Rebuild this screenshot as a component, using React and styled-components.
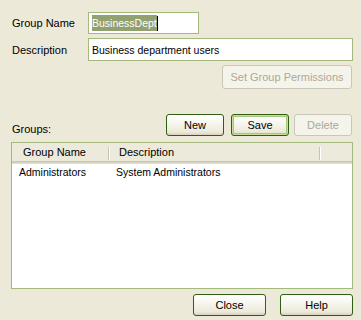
import styled, { createGlobalStyle, css } from 'styled-components'

const GlobalStyle = createGlobalStyle`
    html, body {
        margin: 0;
        padding: 0;
        background: #ece9d8;
    }
    body {
        font-family: "Liberation Sans", Arial, sans-serif;
        font-size: 10.5px;
        color: #000;
    }
`

const Dialog = styled.div`
    width: 361px;
    height: 320px;
    box-sizing: border-box;
    padding: 12px 8px 0 11px;
    background: #ece9d8;
    display: flex;
    flex-direction: column;
`
const FieldRow = styled.div`
    display: flex;
    align-items: center;
    margin-top: ${({ top }) => top || 0}px;
`
const Label = styled.label`
    width: 76px;
    padding-left: 1px;
    flex-shrink: 0;
    font-size: 11px;
`
const Input = styled.div`
    box-sizing: border-box;
    width: ${({ width }) => width ? `${width}px` : 'auto'};
    flex: ${({ width }) => width ? 'none' : '1'};
    height: ${({ height }) => height || 22}px;
    border: 1px solid #a5b97f;
    background: #fff;
    padding: 0 3px;
    display: flex;
    align-items: center;
    white-space: nowrap;
`
const Selected = styled.span`
    background: #93a070;
    color: #fff;
    line-height: 16px;
`
const Caret = styled.span`
    display: inline-block;
    width: 1px;
    height: 15px;
    background: #000;
`
const ButtonRow = styled.div`
    display: flex;
    align-items: flex-end;
    justify-content: flex-end;
    margin-top: ${({ top }) => top || 0}px;
    margin-right: ${({ right }) => right || 0}px;
`
const Button = styled.button`
    box-sizing: border-box;
    width: ${({ width }) => width}px;
    height: ${({ height }) => height || 22}px;
    margin-left: ${({ gap }) => gap || 0}px;
    font-family: inherit;
    font-size: 11px;
    border-radius: 3px;
    padding: 0;
    border: 1px solid #2f5d12;
    color: #000;
    background: linear-gradient(#ffffff 0%, #f7f6ef 40%, #ece9d8 85%, #d6d0c0 100%);
    ${({ primary }) => primary && css`
        box-shadow: inset 0 0 0 1px #c6df9c, inset 0 0 0 2px #a6c87a;
    `}
    ${({ disabled }) => disabled && css`
        border-color: #c9c7ba;
        color: #aca899;
        background: #f5f4ea;
    `}
`
const GroupsLabel = styled.span`
    margin-right: auto;
    padding-left: 1px;
    padding-bottom: 1px;
    font-size: 11px;
`
const List = styled.div`
    margin-top: 6px;
    height: 147px;
    width: 342px;
    box-sizing: border-box;
    border: 1px solid #a5b97f;
    background: #fff;
    display: flex;
    flex-direction: column;
`
const Header = styled.div`
    display: flex;
    height: 21px;
    background: #ebeadb;
    box-shadow: inset 0 -1px #e2dfcf, inset 0 -2px #d6d3c1, inset 0 -3px #cbc7b8;
`
const HeadCell = styled.div`
    width: ${({ width }) => width}px;
    flex: ${({ width }) => width ? 'none' : '1'};
    box-sizing: border-box;
    padding: 3px 0 0 ${({ pad }) => pad}px;
    position: relative;
    font-size: 11px;
    ${({ divider }) => divider && css`
        &::after {
            content: '';
            position: absolute;
            right: 0;
            top: 4px;
            height: 13px;
            width: 1px;
            background: #c7c5b2;
            box-shadow: 1px 0 #fff;
        }
    `}
`
const Row = styled.div`
    display: flex;
    height: 16px;
    align-items: center;
`
const Cell = styled.div`
    width: ${({ width }) => width}px;
    flex: ${({ width }) => width ? 'none' : '1'};
    padding-left: ${({ pad }) => pad}px;
    box-sizing: border-box;
    white-space: nowrap;
`

const App = () => {
    return (
        <Dialog>
            <GlobalStyle />
            <FieldRow>
                <Label>Group Name</Label>
                <Input width={111}>
                    <Selected>BusinessDept</Selected>
                    <Caret />
                </Input>
            </FieldRow>
            <FieldRow top={4}>
                <Label>Description</Label>
                <Input height={23}>Business department users</Input>
            </FieldRow>
            <ButtonRow top={4} right={1}>
                <Button width={130} height={24} disabled>Set Group Permissions</Button>
            </ButtonRow>
            <ButtonRow top={25} right={1}>
                <GroupsLabel>Groups:</GroupsLabel>
                <Button width={58}>New</Button>
                <Button width={58} gap={7} primary>Save</Button>
                <Button width={58} gap={5} disabled>Delete</Button>
            </ButtonRow>
            <List>
                <Header>
                    <HeadCell width={97} pad={11} divider>Group Name</HeadCell>
                    <HeadCell width={211} pad={10} divider>Description</HeadCell>
                    <HeadCell />
                </Header>
                <Row>
                    <Cell width={104} pad={7}>Administrators</Cell>
                    <Cell>System Administrators</Cell>
                </Row>
            </List>
            <ButtonRow top={5}>
                <Button width={73}>Close</Button>
                <Button width={73} gap={14}>Help</Button>
            </ButtonRow>
        </Dialog>
    )
}

export default App
